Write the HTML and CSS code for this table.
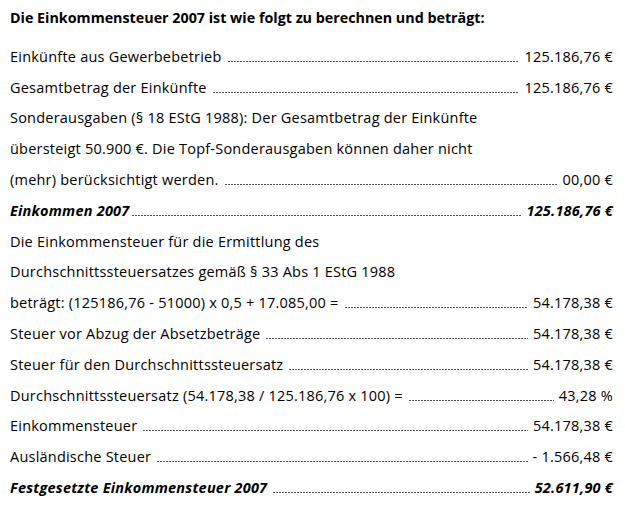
FILE: index.html
```html
<!DOCTYPE html>
<html lang="de">
<head>
<meta charset="utf-8">
<title>Einkommensteuer 2007</title>
<link rel="stylesheet" href="styles.css">
</head>
<body>
<div class="sheet">
  <div class="title">Die Einkommensteuer 2007 ist wie folgt zu berechnen und beträgt:</div>
  <div class="rows">
    <div class="row"><span class="label">Einkünfte aus Gewerbebetrieb</span><span class="dots"></span><span class="value">125.186,76 €</span></div>
    <div class="row"><span class="label">Gesamtbetrag der Einkünfte</span><span class="dots"></span><span class="value">125.186,76 €</span></div>
    <div class="row"><span class="label">Sonderausgaben (§ 18 EStG 1988): Der Gesamtbetrag der Einkünfte</span></div>
    <div class="row"><span class="label">übersteigt 50.900 €. Die Topf-Sonderausgaben können daher nicht</span></div>
    <div class="row"><span class="label">(mehr) berücksichtigt werden.</span><span class="dots"></span><span class="value">00,00 €</span></div>
    <div class="row strong"><span class="label">Einkommen 2007</span><span class="dots tight"></span><span class="value">125.186,76 €</span></div>
    <div class="row"><span class="label">Die Einkommensteuer für die Ermittlung des</span></div>
    <div class="row"><span class="label">Durchschnittssteuersatzes gemäß § 33 Abs 1 EStG 1988</span></div>
    <div class="row"><span class="label">beträgt: (125186,76 - 51000) x 0,5 + 17.085,00 =</span><span class="dots"></span><span class="value">54.178,38 €</span></div>
    <div class="row"><span class="label">Steuer vor Abzug der Absetzbeträge</span><span class="dots"></span><span class="value">54.178,38 €</span></div>
    <div class="row"><span class="label">Steuer für den Durchschnittssteuersatz</span><span class="dots"></span><span class="value">54.178,38 €</span></div>
    <div class="row"><span class="label">Durchschnittssteuersatz (54.178,38 / 125.186,76 x 100) =</span><span class="dots"></span><span class="value">43,28 %</span></div>
    <div class="row"><span class="label">Einkommensteuer</span><span class="dots"></span><span class="value">54.178,38 €</span></div>
    <div class="row"><span class="label">Ausländische Steuer</span><span class="dots"></span><span class="value">- 1.566,48 €</span></div>
    <div class="row strong"><span class="label">Festgesetzte Einkommensteuer 2007</span><span class="dots"></span><span class="value">52.611,90 €</span></div>
  </div>
</div>
</body>
</html>
```

FILE: styles.css
```css
html, body {
  margin: 0;
  padding: 0;
  background: #ffffff;
}

body {
  font-family: "Open Sans", Lato, "Liberation Sans", sans-serif;
  font-size: 14.5px;
  color: #000000;
}

.sheet {
  width: 603px;
  padding: 3px 12px 0 10px;
}

.title {
  font-weight: bold;
  font-size: 14.3px;
  line-height: 30.8px;
  margin-bottom: 8px;
}

.rows {
  display: flex;
  flex-direction: column;
}

.row {
  display: flex;
  align-items: baseline;
  line-height: 30.8px;
  letter-spacing: 0.22px;
  white-space: nowrap;
}

.row.strong {
  font-weight: bold;
  font-style: italic;
}

.dots {
  flex: 1;
  align-self: baseline;
  height: 1px;
  margin: 0 5px 0 6px;
  background-image: linear-gradient(to right, #505050 0, #505050 2px, transparent 2px);
  background-size: 3px 1px;
  background-repeat: repeat-x;
}

.dots.tight {
  margin-left: 2px;
}

.value {
  text-align: right;
}
```
